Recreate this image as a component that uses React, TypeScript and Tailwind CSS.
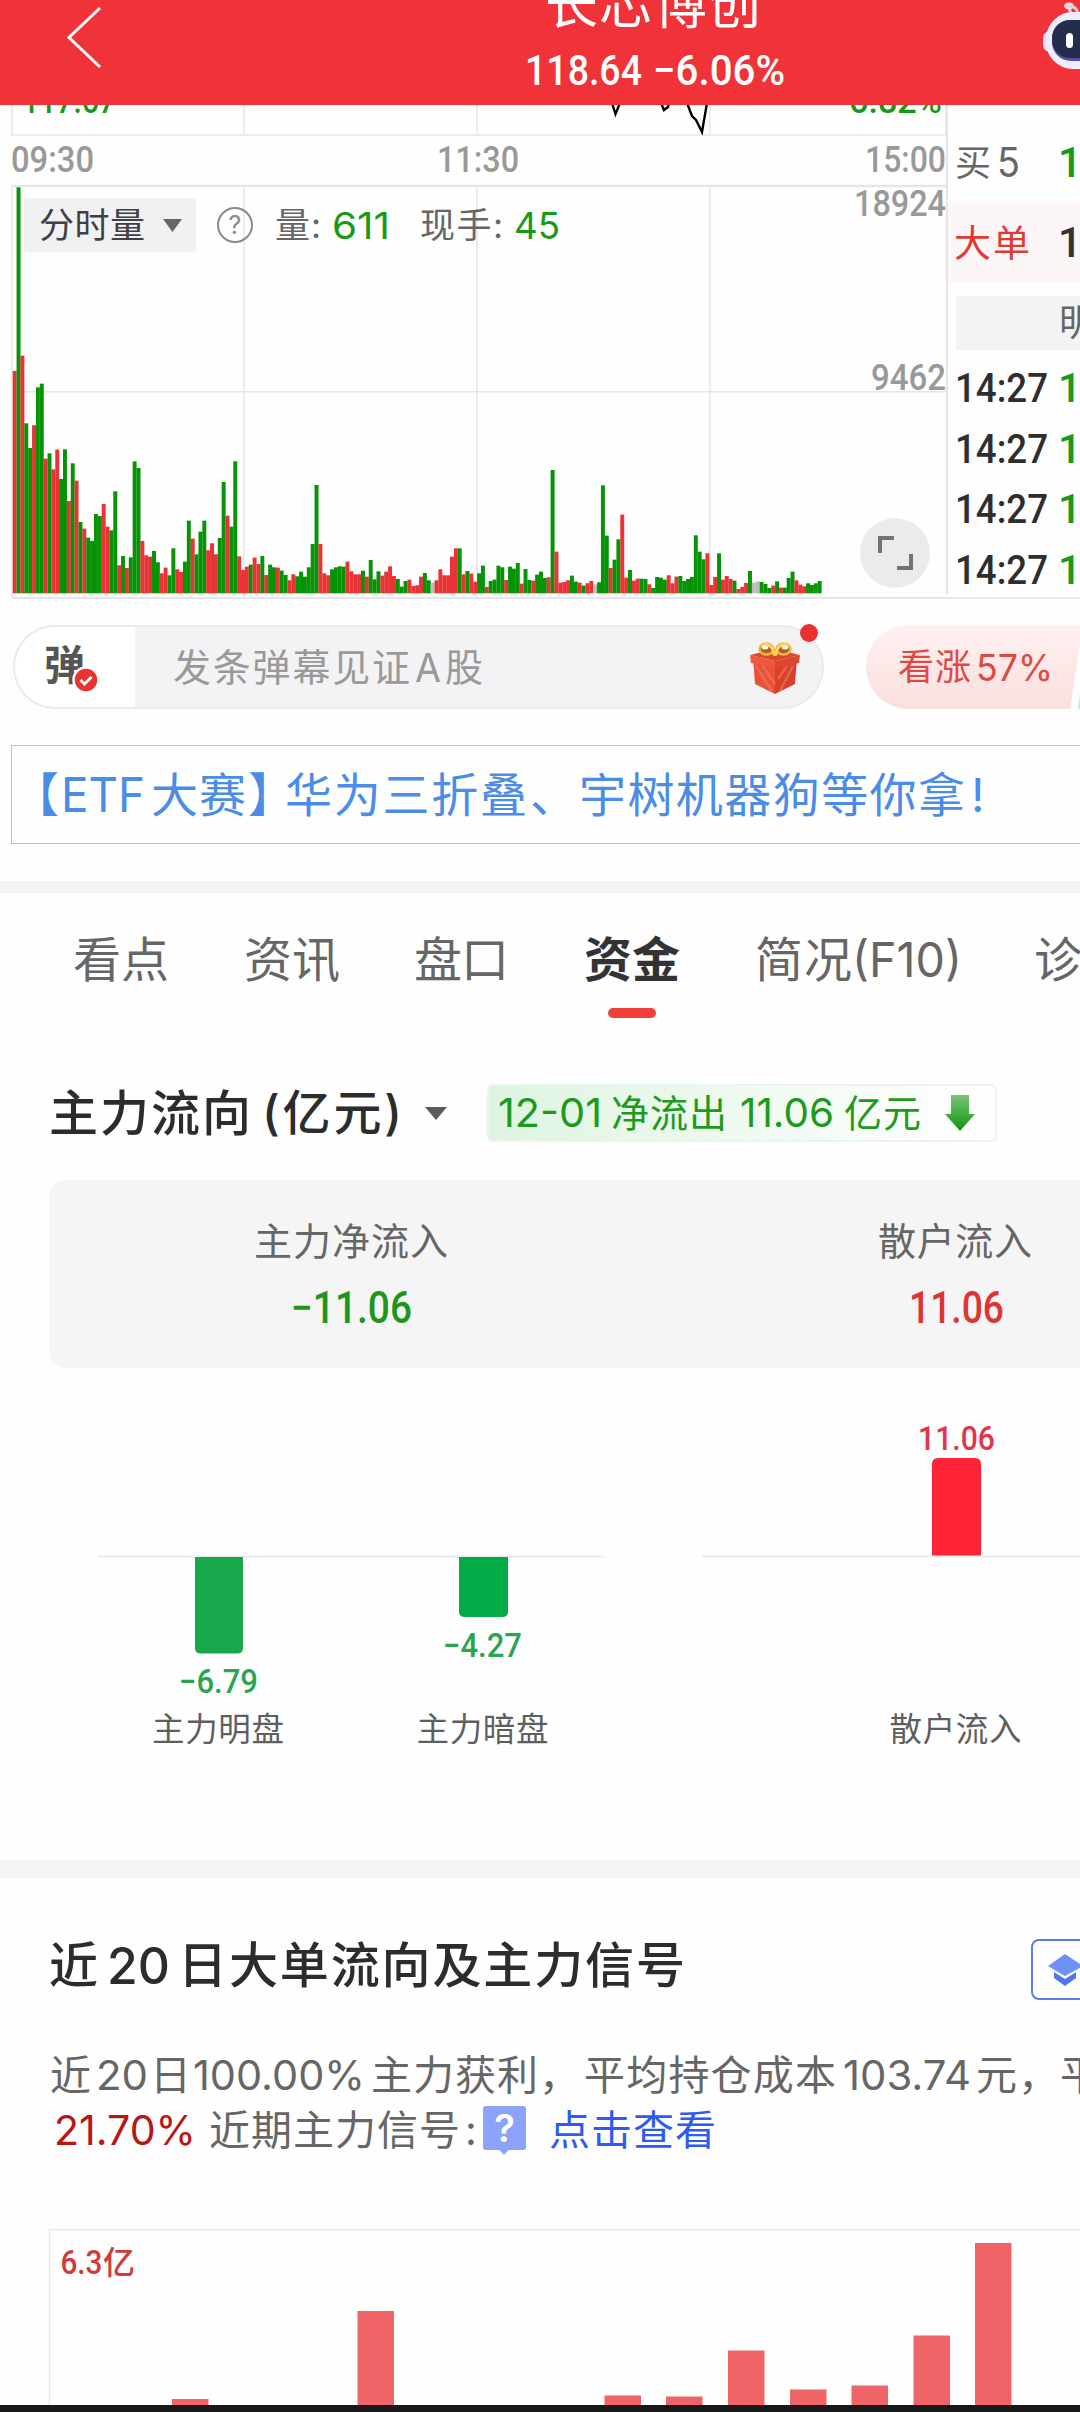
import { useLayoutEffect, useRef, type ReactNode } from "react";

const SANS = "font-['Inter','Noto_Sans_CJK_SC',sans-serif]";
const DIN = "font-['Roboto','Noto_Sans_CJK_SC',sans-serif]";

/* Text that fills the width of its box: by tracking, or by squeezing the glyphs. */
function Fit({ className, squeeze = false, children }: { className: string; squeeze?: boolean; children: ReactNode }) {
  const outer = useRef<HTMLSpanElement>(null);
  const inner = useRef<HTMLSpanElement>(null);
  useLayoutEffect(() => {
    const o = outer.current;
    const i = inner.current;
    if (!o || !i) return;
    i.style.letterSpacing = "0px";
    i.style.transform = "none";
    const natural = i.getBoundingClientRect().width;
    const target = o.getBoundingClientRect().width;
    const count = (i.textContent ?? "").length;
    if (squeeze) i.style.transform = `scaleX(${target / natural})`;
    else if (count > 1) i.style.letterSpacing = `${(target - natural) / (count - 1)}px`;
  }, [squeeze]);
  return (
    <span ref={outer} className={`block shrink-0 leading-none ${className}`}>
      <span ref={inner} className="inline-block origin-left whitespace-pre">
        {children}
      </span>
    </span>
  );
}

type Bar = [string, number];

const VOLUME: Bar[] = (
  "R603 G52 R557 G760 G834 R766 G652 G641 R866 G850 R898 R839 G927 G838 R993 G880 R932 G1056 R1076 G1103 G1113 G1032 G1038 R1002 R1070 G1081 G964 R1186 G1158 R1194 G1162 G874 G894 R1113 R1156 R1160 G1143 G1177 R1210 R1193 G1216 G1135 R1198 R1206 G1175 G1052 R1106 G1153 G1085 G1052 R1141 R1120 R1153 G1104 G936 R1037 G1070 G874 R1159 R1200 R1190 G1184 R1163 R1182 G1158 R1215 G1184 G1192 R1193 G1202 G1215 R1231 R1213 G1219 G1205 G1220 G1192 G1122 G945 R1122 R1210 R1216 G1198 G1192 G1189 G1190 R1175 R1204 R1213 R1213 G1202 R1220 G1170 G1228 G1204 R1217 R1205 R1189 R1218 G1227 G1250 G1233 R1229 R1248 R1246 R1220 G1209 G1231 N1238 R1231 R1198 R1216 R1216 R1160 R1135 G1135 R1213 G1203 R1211 R1235 G1210 G1187 R1251 G1233 G1229 G1187 G1192 R1230 G1190 G1196 G1179 R1241 G1197 G1230 R1232 G1214 G1205 G1224 R1222 G900 R1145 R1238 R1236 R1231 G1217 G1235 R1238 G1247 R1240 R1233 N1243 G1237 G946 G1097 R1194 G1169 G1108 R1034 R1223 G1200 R1232 R1226 G1226 G1227 R1243 G1254 G1221 G1223 G1229 R1216 R1240 R1220 G1218 G1233 G1227 G1221 G1096 G1145 G1168 R1150 R1245 R1221 G1150 R1229 R1218 R1227 G1232 R1257 R1251 R1239 G1203 N1238 N1234 G1236 G1242 G1254 R1247 G1234 R1253 G1253 G1224 G1205 R1231 R1244 R1249 G1240 G1245 G1240 G1233"
)
  .split(" ")
  .map((s) => [s[0], (1270 - Number(s.slice(1))) / 3]);

const TONE: Record<string, string> = { R: "#e93336", G: "#069306", N: "#bdbdbd" };

function Header() {
  return (
    <header className="flex h-[105px] overflow-hidden bg-[#ef3338]">
      <svg className="mt-1 ml-[64px] h-[68px] w-[40px] shrink-0" viewBox="0 0 40 68" fill="none" stroke="#fff" strokeWidth="3">
        <path d="M36 4 L5 33.5 L36 63" />
      </svg>
      <div className="ml-[399px] flex w-[300px] shrink-0 flex-col items-center text-white">
        <Fit className={`mt-[-21px] w-[216px] text-[53px] ${SANS}`}>长芯博创</Fit>
        <div className={`mt-[18px] ml-[3px] flex text-[42px] font-medium ${DIN}`}>
          <Fit squeeze className="w-[117px]">118.64</Fit>
          <Fit squeeze className="ml-[11px] w-[132px]">−6.06%</Fit>
        </div>
      </div>
      <svg className="ml-[239px] h-[75px] w-[38px] shrink-0" viewBox="0 0 38 75">
        <path d="M29 15Q28 7 24 6" fill="none" stroke="#f3c6d6" strokeWidth="3" />
        <ellipse cx="27" cy="6" rx="5" ry="3.500" fill="#f8dbe4" />
        <path d="M27 6Q34 6 36 13" fill="none" stroke="#f3c6d6" strokeWidth="3" />
        <rect x="1" y="31" width="14" height="21" rx="7" fill="#dcd9fa" />
        <rect x="4" y="12" width="76" height="57" rx="27" fill="#eeecfd" />
        <rect x="10" y="20" width="70" height="41" rx="19" fill="#5b4aa8" />
        <rect x="10" y="20" width="70" height="38" rx="18" fill="#232e4d" />
        <rect x="24" y="33" width="7" height="15" rx="3.500" fill="#fff" />
      </svg>
    </header>
  );
}

function IntradayChart() {
  const label = "font-['Roboto',sans-serif]";
  return (
    <div className="relative w-[948px] shrink-0">
      <svg className="block h-[494px] w-[948px]" viewBox="0 105 948 494">
        <g stroke="#e6e6e8" strokeWidth="1.5" fill="none">
          <path d="M12 105V135H946M244 105V135M477 105V135M710 105V135M946 105V135" />
          <path d="M244 186V598M477 186V598M710 186V598M12 391.7H946M12 186V598" />
          <path d="M12 186H946" strokeWidth="2.5" />
          <path d="M947 105V594" strokeWidth="2.5" />
          <path d="M12 598H948" strokeWidth="2.5" />
        </g>
        <path d="M612 103L615.5 114L620 103M661 103L664 110L668 107L669 103M687 103L692 116L696 120L702 132L707 103" fill="none" stroke="#000" strokeWidth="2.4" />
        <g className={label} fontSize="35" fontWeight="500" fill="#159a15">
          <text x="22" y="113" textLength="94" lengthAdjust="spacingAndGlyphs">117.67</text>
          <text x="849" y="113" textLength="93" lengthAdjust="spacingAndGlyphs">6.82%</text>
        </g>
        <g className={label} fontSize="36.5" fontWeight="500" fill="#999">
          <text x="11" y="172" textLength="83" lengthAdjust="spacingAndGlyphs">09:30</text>
          <text x="437" y="172" textLength="82" lengthAdjust="spacingAndGlyphs">11:30</text>
          <text x="865" y="172" textLength="81" lengthAdjust="spacingAndGlyphs">15:00</text>
          <text x="854" y="216" textLength="92" lengthAdjust="spacingAndGlyphs">18924</text>
          <text x="871" y="390" textLength="75" lengthAdjust="spacingAndGlyphs">9462</text>
        </g>
        {VOLUME.map(([tone, h], i) => (
          <rect key={i} x={12.7 + i * 3.87} y={593.3 - h} width="3.95" height={h} fill={TONE[tone]} />
        ))}
      </svg>
      <div className={`absolute top-[93px] left-[24px] flex h-[54px] items-center ${SANS}`}>
        <div className="flex h-[54px] w-[172px] items-center rounded-sm bg-[#f1f1f4] text-[#3f3f44]">
          <Fit className="ml-[15px] w-[106px] text-[35px]">分时量</Fit>
          <svg className="ml-[18px] h-[13px] w-[19px]" viewBox="0 0 19 13">
            <path d="M0 0H19L9.500 13Z" fill="#666" />
          </svg>
        </div>
        <span className="ml-[21px] flex h-[36px] w-[36px] items-center justify-center rounded-full border-[2.5px] border-[#8a8a8a] text-[25px] leading-none text-[#8a8a8a]">?</span>
        <Fit className="ml-[22px] w-[46px] text-[35px] text-[#666]">量:</Fit>
        <Fit squeeze className="ml-[11px] w-[58px] text-[37px] text-[#189a18]">611</Fit>
        <Fit className="ml-[30px] w-[83px] text-[35px] text-[#666]">现手:</Fit>
        <Fit squeeze className="ml-[11px] w-[46px] text-[37px] text-[#189a18]">45</Fit>
      </div>
      <button className="absolute top-[413px] left-[860px] flex h-[70px] w-[70px] items-center justify-center rounded-full bg-[#ebebec]">
        <svg className="h-[36px] w-[36px]" viewBox="0 0 36 36" fill="none" stroke="#737373" strokeWidth="4">
          <path d="M3 18V3H17M20 33H34V19" />
        </svg>
      </button>
    </div>
  );
}

function OrderBook() {
  return (
    <div className={`flex-1 overflow-hidden border-b-2 border-[#e9e9eb] ${SANS}`}>
      <div className="flex h-[96px] items-center pt-[19px] pl-[7px] text-[#666]">
        <Fit className="w-[37px] text-[36px]">买</Fit>
        <Fit className="ml-[5px] w-[23px] text-[41px]" squeeze>5</Fit>
        <span className={`ml-[38px] text-[42px] leading-none font-medium text-[#189a18] ${DIN}`}>1</span>
      </div>
      <div className="flex h-[81px] items-center bg-[#fdf6f7] pt-[3px] pl-[6px]">
        <Fit className="w-[76px] text-[37px] text-[#e03a34]">大单</Fit>
        <span className={`ml-[28px] text-[42px] leading-none font-medium text-[#333] ${DIN}`}>1</span>
      </div>
      <div className="mt-[14px] ml-[8px] flex h-[54px] items-center bg-[#f3f3f4] pl-[103px] text-[37px] whitespace-nowrap text-[#666]">明细</div>
      <div className="mt-[8px] flex flex-col">
        {[0, 1, 2, 3].map((i) => (
          <div key={i} className={`flex h-[60.800px] items-center pl-[7px] text-[41px] font-medium ${DIN}`}>
            <Fit squeeze className="w-[93px] text-[#2e2e2e]">14:27</Fit>
            <span className="ml-[10px] leading-none text-[#189a18]">1</span>
          </div>
        ))}
      </div>
    </div>
  );
}

function Gift() {
  return (
    <svg className="h-[54px] w-[50px]" viewBox="0 0 50 54">
      <path d="M3 16L25 23V53L5 43Z" fill="#ea5238" />
      <path d="M47 16L25 23V53L45 43Z" fill="#d8402c" />
      <path d="M6 25L22 50M12 24L25 43M43 25L30 50M37 25L28 38" stroke="#f4775c" strokeWidth="2.500" opacity=".6" />
      <path d="M0 14L25 8L50 14L25 20Z" fill="#d9472f" />
      <path d="M0 14L25 20V27L1 22Z" fill="#f0573d" />
      <path d="M50 14L25 20V27L49 22Z" fill="#df4630" />
      <g fill="#a8622c" stroke="#f3b63c" strokeWidth="2.500">
        <ellipse cx="16.500" cy="8" rx="7" ry="5.500" />
        <ellipse cx="33.500" cy="8" rx="7" ry="5.500" />
      </g>
      <g fill="#fff1dc">
        <ellipse cx="15" cy="6" rx="3.500" ry="2.500" />
        <ellipse cx="35" cy="6" rx="3.500" ry="2.500" />
      </g>
      <path d="M14 3.500Q20 2 24 11M36 3.500Q30 2 26 11" stroke="#ffd76b" strokeWidth="2.500" fill="none" />
      <circle cx="25" cy="12" r="3" fill="#ffcf52" />
    </svg>
  );
}

function DanmuRow() {
  return (
    <div className={`mt-[26px] flex h-[84px] ${SANS}`}>
      <div className="relative ml-[13px] flex w-[811px] shrink-0 items-center rounded-full border-2 border-[#e9eaee] bg-[#f3f3f5]">
        <div className="relative flex h-full w-[120px] items-center rounded-l-full bg-white">
          <span className="ml-[29px] pb-[3px] text-[41px] leading-none font-bold text-[#555]">弹</span>
          <svg className="absolute top-[39px] left-[57px] h-[28px] w-[28px]" viewBox="0 0 28 28">
            <circle cx="14" cy="14" r="12.500" fill="#e8352f" stroke="#fff" strokeWidth="2.500" />
            <path d="M8.500 14L12.500 18L19.500 11" fill="none" stroke="#fff" strokeWidth="3" />
          </svg>
        </div>
        <Fit className="ml-[38px] w-[237px] text-[38px] text-[#999]">发条弹幕见证</Fit>
        <Fit squeeze className="ml-[5px] w-[26px] text-[39px] text-[#999]">A</Fit>
        <Fit className="ml-[4px] w-[38px] text-[38px] text-[#999]">股</Fit>
        <div className="mt-[2px] ml-[267px]">
          <Gift />
        </div>
        <span className="absolute top-[-3px] left-[785px] h-[18px] w-[18px] rounded-full bg-[#e8302c]" />
      </div>
      <div className="relative ml-[42px] flex flex-1 items-center overflow-hidden">
        <svg className="absolute inset-0 h-[84px] w-[214px]" viewBox="0 0 214 84">
          <defs>
            <linearGradient id="rise" x1="0" y1="0" x2="0" y2="1">
              <stop offset="0" stopColor="#fdf1f0" />
              <stop offset="1" stopColor="#fbdfde" />
            </linearGradient>
          </defs>
          <path d="M42 0H217L204 84H42A42 42 0 0 1 42 0Z" fill="url(#rise)" />
          <path d="M217 48L212 84H217Z" fill="#bfe8d2" />
        </svg>
        <div className="relative flex items-center text-[#e04843]">
          <Fit className="ml-[32px] w-[73px] text-[36px]">看涨</Fit>
          <Fit squeeze className="ml-[5px] w-[77px] text-[37px]">57%</Fit>
        </div>
      </div>
    </div>
  );
}

function Banner() {
  return (
    <div className={`mt-[36px] ml-[11px] flex h-[99px] items-center overflow-hidden border-[1.5px] border-r-0 border-[#b9c2ca] text-[47px] text-[#4a8ce6] ${SANS}`}>
      <span className="w-[49px] shrink-0 leading-none">【</span>
      <Fit squeeze className="ml-[0px] w-[84px] text-[48px]">ETF</Fit>
      <Fit className="ml-[6px] w-[95px]">大赛</Fit>
      <span className="ml-[2px] w-[32px] shrink-0 leading-none">】</span>
      <Fit className="ml-[5px] w-[242px]">华为三折叠</Fit>
      <span className="ml-[3px] w-[47px] shrink-0 leading-none">、</span>
      <Fit className="ml-[2px] w-[386px]">宇树机器狗等你拿</Fit>
      <span className="ml-[6px] leading-none">!</span>
    </div>
  );
}

function Tabs() {
  return (
    <nav className={`relative flex h-[134px] overflow-hidden pt-[43px] text-[48px] text-[#666] ${SANS}`}>
      <Fit className="ml-[73px] w-[96px]">看点</Fit>
      <Fit className="ml-[75px] w-[96px]">资讯</Fit>
      <Fit className="ml-[74px] w-[95px]">盘口</Fit>
      <div className="ml-[75px] flex flex-col items-center">
        <Fit className="w-[96px] font-semibold text-[#333]">资金</Fit>
        <span className="mt-[24px] h-[10px] w-[48px] rounded-full bg-[#f23e38]" />
      </div>
      <Fit className="ml-[75px] w-[97px]">简况</Fit>
      <Fit squeeze className="ml-[0px] w-[110px]">(F10)</Fit>
      <span className="ml-[72px] shrink-0 leading-none">诊断</span>
    </nav>
  );
}

function FlowTitle() {
  return (
    <div className={`mt-[57px] flex h-[58px] items-center ${SANS}`}>
      <Fit className="ml-[49px] w-[202px] text-[49px] font-medium text-[#2c2c2c]">主力流向</Fit>
      <Fit className="ml-[11px] w-[140px] text-[48px] font-medium text-[#2c2c2c]">(亿元)</Fit>
      <svg className="ml-[22px] h-[13px] w-[24px]" viewBox="0 0 24 13">
        <path d="M1 0H23L12 13Z" fill="#5b5b5b" />
      </svg>
      <div className="ml-[39px] flex h-[58px] w-[510px] items-center rounded-md border-2 border-[#ecf5ec] bg-linear-to-r from-[#def4e1] to-white text-[#1c9a1c]">
        <Fit squeeze className="ml-[9px] w-[104px] text-[40px]">12-01</Fit>
        <Fit className="ml-[9px] w-[116px] text-[38px]">净流出</Fit>
        <Fit squeeze className="ml-[13px] w-[94px] text-[40px]">11.06</Fit>
        <Fit className="ml-[10px] w-[77px] text-[38px]">亿元</Fit>
        <svg className="ml-[23px] h-[38px] w-[32px]" viewBox="0 0 32 38">
          <defs>
            <linearGradient id="down" x1="0" y1="0" x2="0" y2="1">
              <stop offset="0" stopColor="#7cc47a" />
              <stop offset="1" stopColor="#0c960c" />
            </linearGradient>
          </defs>
          <path d="M7 1H25V20H31L16 37L1 20H7Z" fill="url(#down)" />
        </svg>
      </div>
    </div>
  );
}

function FlowCard() {
  return (
    <div className={`mt-[38px] ml-[49px] flex h-[188px] overflow-hidden rounded-l-[16px] bg-[#f5f5f5] pt-[42px] ${SANS}`}>
      <div className="ml-[203px] flex w-[198px] shrink-0 flex-col items-center">
        <Fit className="w-[194px] text-[38px] text-[#666]">主力净流入</Fit>
        <Fit squeeze className={`mt-[26px] w-[121px] text-[44px] font-medium text-[#1c961c] ${DIN}`}>−11.06</Fit>
      </div>
      <div className="ml-[427px] flex w-[156px] shrink-0 flex-col items-center">
        <Fit className="w-[154px] text-[38px] text-[#666]">散户流入</Fit>
        <Fit squeeze className={`mt-[26px] ml-[2px] w-[95px] text-[44px] font-medium text-[#db3634] ${DIN}`}>11.06</Fit>
      </div>
    </div>
  );
}

function FlowBars() {
  return (
    <svg className="block h-[492px] w-[1080px]" viewBox="0 1368 1080 492">
      <path d="M98 1556.500H604M702 1556.500H1080" stroke="#ebebeb" strokeWidth="2" />
      <path d="M932 1555.500V1464Q932 1458 938 1458H975Q981 1458 981 1464V1555.500Z" fill="#ff2436" />
      <path d="M195 1557H243V1648Q243 1653.500 237 1653.500H201Q195 1653.500 195 1648Z" fill="#17a84b" />
      <path d="M459 1557H508V1612Q508 1617 502 1617H465Q459 1617 459 1612Z" fill="#02ab47" />
      <g className="font-['Roboto',sans-serif]" fontSize="33" fontWeight="500">
        <text x="918" y="1450" textLength="77" lengthAdjust="spacingAndGlyphs" fill="#e0364a">11.06</text>
        <g fill="#2aa450">
          <text x="179" y="1693" textLength="79" lengthAdjust="spacingAndGlyphs">−6.79</text>
          <text x="443" y="1657" textLength="79" lengthAdjust="spacingAndGlyphs">−4.27</text>
        </g>
      </g>
      <g className="font-['Noto_Sans_CJK_SC',sans-serif]" fontSize="32.5" fill="#5e5e5e">
        <text x="152" y="1741" textLength="132">主力明盘</text>
        <text x="416.500" y="1741" textLength="132">主力暗盘</text>
        <text x="889.500" y="1741" textLength="132">散户流入</text>
      </g>
    </svg>
  );
}

function SignalTitle() {
  return (
    <div className={`mt-[61px] flex h-[61px] items-center overflow-hidden text-[49px] font-medium text-[#2c2c2c] ${SANS}`}>
      <Fit className="mt-[-8px] ml-[49px] w-[50px]">近</Fit>
      <Fit squeeze className="mt-[-8px] ml-[8px] w-[63px] text-[51px]">20</Fit>
      <Fit className="mt-[-8px] ml-[8px] w-[507px]">日大单流向及主力信号</Fit>
      <div className="ml-[346px] flex h-[61px] w-[120px] shrink-0 items-center rounded-lg border-2 border-[#5d7ce2] pl-[15px]">
        <svg className="h-[32px] w-[38px]" viewBox="0 0 38 32">
          <path d="M6 16L17 24L28 16V24L17 32L6 24Z" fill="#4c78ee" />
          <path d="M17 0L35 12L17 22L0 12Z" fill="#6e92f4" />
          <path d="M5 16.500L17 24L29 16.500" fill="none" stroke="#fff" strokeWidth="1.500" />
        </svg>
      </div>
    </div>
  );
}

function SignalText() {
  return (
    <div className={`mt-[47px] text-[41px] text-[#666] ${SANS}`}>
      <div className="flex h-[56px] items-center overflow-hidden">
        <Fit className="ml-[50px] w-[41px]">近</Fit>
        <Fit squeeze className="ml-[5px] w-[52px]">20</Fit>
        <Fit className="ml-[2px] w-[41px]">日</Fit>
        <Fit squeeze className="ml-[2px] w-[172px]">100.00%</Fit>
        <Fit className="ml-[6px] w-[209px]">主力获利，</Fit>
        <Fit className="ml-[4px] w-[252px]">平均持仓成本</Fit>
        <Fit squeeze className="ml-[7px] w-[128px]">103.74</Fit>
        <Fit className="ml-[5px] w-[83px]">元，</Fit>
        <span className="ml-[1px] leading-none">平</span>
      </div>
      <div className="flex h-[54px] items-center">
        <Fit squeeze className="ml-[54px] w-[142px] text-[#b81616]">21.70%</Fit>
        <Fit className="ml-[13px] w-[251px]">近期主力信号</Fit>
        <span className="ml-[5px] w-[15px] leading-none">:</span>
        <div className="relative mt-[-4px] ml-[3px] flex h-[44px] w-[43px] items-center justify-center rounded-[3px] bg-[#8ba3fb] text-[38px] leading-none font-semibold text-white">
          ?
          <span className="absolute top-[39px] left-[17px] h-[8px] w-[8px] rotate-45 bg-[#8ba3fb]" />
        </div>
        <Fit className="ml-[23px] w-[167px] text-[#2f5cee]">点击查看</Fit>
      </div>
    </div>
  );
}

const DAILY: [number, number][] = [
  [172, 2399], [357.5, 2311], [604.5, 2395.5], [666, 2396.5], [728, 2350.5], [790, 2389.5], [851.5, 2385.5], [913.5, 2335.5], [975, 2243],
];

function DailyChart() {
  return (
    <svg className="block h-[176px] w-[1080px]" viewBox="0 2229 1080 176">
      <path d="M49.500 2405V2229.800H1080" fill="none" stroke="#f0e6e8" strokeWidth="1.500" />
      {DAILY.map(([x, y]) => (
        <rect key={x} x={x} y={y} width="36.500" height={2405 - y} fill="#ee6467" />
      ))}
      <g fill="#d03a3c" fontSize="34" fontWeight="500">
        <text x="60.500" y="2273.500" textLength="42" lengthAdjust="spacingAndGlyphs" className="font-['Roboto',sans-serif]">6.3</text>
        <text x="103" y="2274" fontSize="32" className="font-['Noto_Sans_CJK_SC',sans-serif]">亿</text>
      </g>
    </svg>
  );
}

export default function App() {
  return (
    <main className="h-[2412px] w-[1080px] overflow-hidden bg-[#fefefe]">
      <Header />
      <section className="flex h-[494px]">
        <IntradayChart />
        <OrderBook />
      </section>
      <DanmuRow />
      <Banner />
      <div className="mt-[37px] h-[12px] bg-[#f4f4f4]" />
      <Tabs />
      <FlowTitle />
      <FlowCard />
      <FlowBars />
      <div className="h-[18px] bg-[#f4f4f4]" />
      <SignalTitle />
      <SignalText />
      <div className="h-[72px]" />
      <DailyChart />
      <div className="h-[12px] bg-[#181818]" />
    </main>
  );
}
